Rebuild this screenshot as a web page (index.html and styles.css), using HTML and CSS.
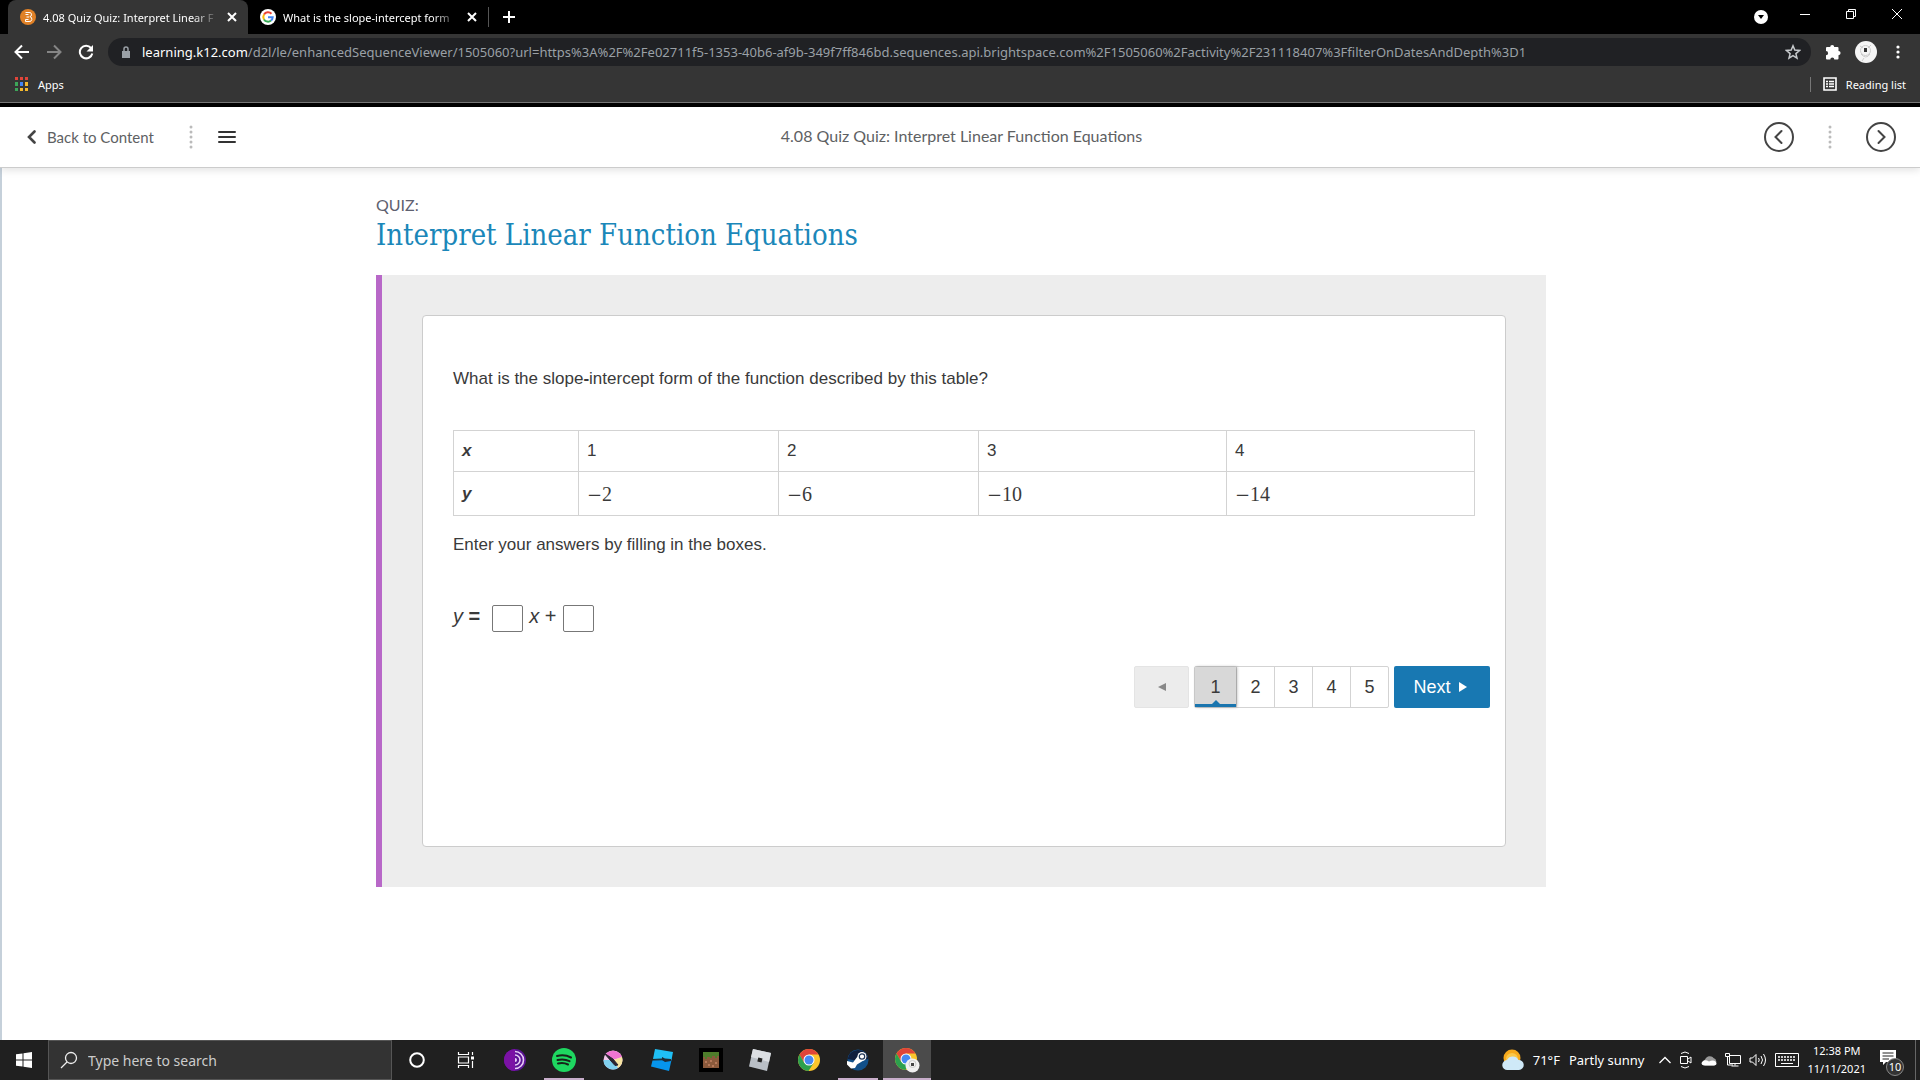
FILE: index.html
```html
<!DOCTYPE html>
<html lang="en">
<head>
    <meta charset="UTF-8">
    <meta name="viewport" content="width=device-width, initial-scale=1.0">
    <title>4.08 Quiz Quiz: Interpret Linear Function Equations</title>
    <link rel="stylesheet" href="styles.css">
</head>
<body>

<svg class="defs" width="0" height="0" aria-hidden="true">
    <symbol id="close" viewBox="0 0 10 10"><path d="M1 1l8 8M9 1l-8 8" fill="none" stroke="#fff" stroke-width="2"/></symbol>
    <symbol id="chrome" viewBox="0 0 24 24">
        <circle cx="12" cy="12" r="11" fill="#fbc52c"/>
        <path d="M2.5 6.5A11 11 0 0 1 21.5 6.500L12 6.500L7 14.500Z" fill="#e04438"/>
        <path d="M2.500 6.500A11 11 0 0 0 11.500 23L16.800 14.800L12 17L7.200 14.700Z" fill="#2ca04e"/>
        <circle cx="12" cy="12" r="5.500" fill="#fff"/>
        <circle cx="12" cy="12" r="4.500" fill="#4688f1"/>
    </symbol>
    <symbol id="dots" viewBox="0 0 4 24">
        <g fill="#bbb"><circle cx="2" cy="2" r="1.500"/><circle cx="2" cy="7" r="1.500"/><circle cx="2" cy="12" r="1.500"/><circle cx="2" cy="17" r="1.500"/><circle cx="2" cy="22" r="1.500"/></g>
    </symbol>
</svg>

<header class="browser">
    <div class="tabs">
        <div class="tab active">
            <svg width="16" height="16" viewBox="0 0 16 16"><circle cx="8" cy="8" r="8" fill="#e08127"/><path d="M5.500 3.500h3.500a2 2 0 0 1 .8 4.200A2.400 2.400 0 0 1 9 12.500H5.500v-2h3M5.500 5.500h3M6.500 8H9" fill="none" stroke="#fff" stroke-width="1"/></svg>
            <span class="tab-title">4.08 Quiz Quiz: Interpret Linear F</span>
            <button class="icon-btn" aria-label="Close tab"><svg width="10" height="10"><use href="#close"/></svg></button>
        </div>
        <div class="tab">
            <svg width="16" height="16" viewBox="0 0 16 16"><circle cx="8" cy="8" r="8" fill="#fff"/><g fill="none" stroke-width="2"><path d="M11.500 4.800A4.700 4.700 0 0 0 4 5.600" stroke="#ea4335"/><path d="M4 5.600a4.700 4.700 0 0 0 0 4.800" stroke="#fbbc05"/><path d="M4 10.400a4.700 4.700 0 0 0 7 1.200" stroke="#34a853"/><path d="M11 11.600A4.700 4.700 0 0 0 12.700 8.200H8" stroke="#4285f4"/></g></svg>
            <span class="tab-title">What is the slope-intercept form</span>
            <button class="icon-btn" aria-label="Close tab"><svg width="10" height="10"><use href="#close"/></svg></button>
        </div>
        <button class="icon-btn new-tab" aria-label="New tab"><svg width="12" height="12" viewBox="0 0 12 12"><path d="M6 0v12M0 6h12" stroke="#fff" stroke-width="2"/></svg></button>
        <div class="window-controls">
            <button class="icon-btn tab-search" aria-label="Search tabs"><svg width="14" height="20" viewBox="0 0 14 20"><circle cx="7" cy="13" r="7" fill="#fff"/><path d="M4 11h6l-3 4z" fill="#000"/></svg></button>
            <button class="icon-btn" aria-label="Minimize"><svg width="10" height="10" viewBox="0 0 10 10"><path d="M0 5.500h10" stroke="#fff"/></svg></button>
            <button class="icon-btn" aria-label="Restore"><svg width="10" height="10" viewBox="0 0 10 10"><path d="M.5 2.500h7v7h-7zM2.500 2V.5h7v7H8" fill="none" stroke="#fff"/></svg></button>
            <button class="icon-btn" aria-label="Close"><svg width="10" height="10" viewBox="0 0 10 10"><path d="M0 0l10 10M10 0L0 10" stroke="#fff"/></svg></button>
        </div>
    </div>

    <div class="toolbar">
        <div class="nav-btns">
            <button class="icon-btn" aria-label="Back"><svg width="16" height="16" viewBox="0 0 16 16"><path d="M15 8H2M8 1.500L1.500 8 8 14.500" fill="none" stroke="#fff" stroke-width="2"/></svg></button>
            <button class="icon-btn" aria-label="Forward"><svg width="16" height="16" viewBox="0 0 16 16"><path d="M1 8h13M8 1.500L14.500 8 8 14.500" fill="none" stroke="#858585" stroke-width="2"/></svg></button>
            <button class="icon-btn" aria-label="Reload"><svg width="16" height="16" viewBox="0 0 16 16"><path d="M13 4a6.300 6.300 0 1 0 1.300 5.500" fill="none" stroke="#fff" stroke-width="2"/><path d="M15 1v6.500H8.500z" fill="#fff"/></svg></button>
        </div>
        <div class="address">
            <svg width="10" height="12" viewBox="0 0 10 12"><path d="M1 5h8v7H1z" fill="#9aa0a6"/><path d="M3 5V3a2 2 0 0 1 4 0v2" fill="none" stroke="#9aa0a6" stroke-width="1.500"/></svg>
            <span class="url"><b>learning.k12.com</b>/d2l/le/enhancedSequenceViewer/1505060?url=https%3A%2F%2Fe02711f5-1353-40b6-af9b-349f7ff846bd.sequences.api.brightspace.com%2F1505060%2Factivity%2F231118407%3FfilterOnDatesAndDepth%3D1</span>
            <button class="icon-btn" aria-label="Bookmark"><svg width="16" height="16" viewBox="0 0 16 16"><path d="M8 1.800l1.800 4.300 4.700.4-3.600 3.100 1.100 4.600L8 11.700l-4 2.500 1.100-4.600L1.500 6.500l4.700-.4z" fill="none" stroke="#c6c9cc" stroke-width="1.500"/></svg></button>
        </div>
        <button class="icon-btn" aria-label="Extensions"><svg width="16" height="16" viewBox="0 0 16 16"><path d="M5.200 3a2 2 0 0 1 4 0h3.300a1 1 0 0 1 1 1v3a2 2 0 0 1 0 4.200v3.300a1 1 0 0 1-1 1H9.300a2 2 0 0 0-4 0H2a1 1 0 0 1-1-1v-3.200a2.100 2.100 0 0 0 0-4.200V4a1 1 0 0 1 1-1z" fill="#fff"/></svg></button>
        <button class="icon-btn" aria-label="Profile"><svg width="22" height="22" viewBox="0 0 22 22"><circle cx="11" cy="11" r="11" fill="#f5f5f5"/><path d="M5 5l3 2M16 4l-3 3M6 13q5 6 9 0M9 17l-2 3" fill="none" stroke="#ccc"/><circle cx="10.500" cy="9.500" r="5" fill="none" stroke="#ccc"/><path d="M9 7h3v4H9z" fill="#333"/></svg></button>
        <button class="icon-btn menu" aria-label="Menu"><svg width="4" height="14" viewBox="0 0 4 14"><g fill="#fff"><circle cx="2" cy="2" r="1.600"/><circle cx="2" cy="7" r="1.600"/><circle cx="2" cy="12" r="1.600"/></g></svg></button>
    </div>

    <div class="bookmarks">
        <a href="#" class="bookmark">
            <svg width="14" height="14" viewBox="0 0 14 14"><g fill="#e0453a"><path d="M0 0h3v3H0zM5 0h3v3H5zM10 0h3v3h-3z"/></g><path d="M0 5h3v4H0zM0 11h3v3H0z" fill="#3da559"/><path d="M5 5h3v4H5z" fill="#4285f4"/><path d="M10 5h3v4h-3zM5 11h3v3H5zM10 11h3v3h-3z" fill="#f4b92e"/></svg>
            Apps
        </a>
        <a href="#" class="bookmark reading">
            <svg width="14" height="14" viewBox="0 0 14 14"><path d="M1 1h12v12H1z" fill="none" stroke="#fff" stroke-width="1.600"/><path d="M3 4.500h2M6 4.500h5M3 7h2M6 7h5M3 9.500h2M6 9.500h5" stroke="#fff" stroke-width="1.500"/></svg>
            Reading list
        </a>
    </div>
</header>

<nav class="course-nav">
    <div class="nav-side">
        <a href="#" class="back-link">
            <svg width="9" height="14" viewBox="0 0 9 14"><path d="M7.500 1.500L2 7l5.500 5.500" fill="none" stroke="#444" stroke-width="2.600" stroke-linecap="round"/></svg>
            Back to Content
        </a>
        <svg width="4" height="24"><use href="#dots"/></svg>
        <button class="icon-btn" aria-label="Table of contents"><svg width="18" height="14" viewBox="0 0 18 14"><path d="M1 2h16M1 7h16M1 12h16" stroke="#333" stroke-width="2" stroke-linecap="round"/></svg></button>
    </div>
    <span class="nav-title">4.08 Quiz Quiz: Interpret Linear Function Equations</span>
    <div class="nav-side nav-arrows">
        <button class="icon-btn" aria-label="Previous"><svg width="30" height="30" viewBox="0 0 30 30"><circle cx="15" cy="15" r="14" fill="none" stroke="#444" stroke-width="2"/><path d="M17.500 9L11.500 15l6 6" fill="none" stroke="#444" stroke-width="2" stroke-linecap="round"/></svg></button>
        <svg width="4" height="24"><use href="#dots"/></svg>
        <button class="icon-btn" aria-label="Next"><svg width="30" height="30" viewBox="0 0 30 30"><circle cx="15" cy="15" r="14" fill="none" stroke="#444" stroke-width="2"/><path d="M12.500 9l6 6-6 6" fill="none" stroke="#444" stroke-width="2" stroke-linecap="round"/></svg></button>
    </div>
</nav>

<main class="page">
    <div class="lesson">
        <p class="kicker">QUIZ:</p>
        <h1>Interpret Linear Function Equations</h1>

        <section class="quiz">
            <form class="card">
                <p>What is the slope<b>-</b>intercept form of the function described by this table?</p>
                <table>
                    <colgroup><col class="col-head"><col class="col-mid"><col class="col-mid"><col class="col-wide"><col></colgroup>
                    <tr><th scope="row">x</th><td>1</td><td>2</td><td>3</td><td>4</td></tr>
                    <tr class="math"><th scope="row">y</th><td><span class="minus">−</span>2</td><td><span class="minus">−</span>6</td><td><span class="minus">−</span>10</td><td><span class="minus">−</span>14</td></tr>
                </table>
                <p>Enter your answers by filling in the boxes.</p>
                <div class="equation">
                    <label for="slope"><i>y</i> <b>=</b></label>
                    <input type="text" id="slope">
                    <label for="intercept"><i>x</i> +</label>
                    <input type="text" id="intercept">
                </div>
                <div class="pager">
                    <button type="button" class="prev" disabled aria-label="Previous question"><svg width="8" height="8" viewBox="0 0 8 8"><path d="M8 0v8L0 4z" fill="#888"/></svg></button>
                    <div class="pages">
                        <button type="button" class="current">1</button>
                        <button type="button">2</button>
                        <button type="button">3</button>
                        <button type="button">4</button>
                        <button type="button">5</button>
                    </div>
                    <button type="button" class="next">Next <svg width="8" height="10" viewBox="0 0 8 10"><path d="M0 0v10l8-5z" fill="#fff"/></svg></button>
                </div>
            </form>
        </section>
    </div>
</main>

<footer class="taskbar">
    <button class="task start" aria-label="Start"><svg width="16" height="16" viewBox="0 0 16 16"><path d="M0 2.300L6.500 1.400v6.100H0zM7.500 1.200L16 0v7.500H7.500zM0 8.500h6.500v6.100L0 13.700zM7.500 8.500H16V16l-8.500-1.200z" fill="#fff"/></svg></button>
    <div class="search">
        <svg width="18" height="18" viewBox="0 0 18 18"><circle cx="11" cy="7" r="5.500" fill="none" stroke="#eee" stroke-width="1.300"/><path d="M7 11l-6 6" stroke="#eee" stroke-width="1.300"/></svg>
        <input type="text" placeholder="Type here to search" aria-label="Search">
    </div>
    <div class="tasks">
        <button class="task" aria-label="Cortana"><svg width="18" height="18" viewBox="0 0 18 18"><circle cx="9" cy="9" r="6.800" fill="none" stroke="#fff" stroke-width="2"/></svg></button>
        <button class="task" aria-label="Task view"><svg width="18" height="16" viewBox="0 0 18 16"><path d="M1.500 0v2.500h10V0M1.500 5h10v6h-10zM1.500 16v-2.500h10V16M15.500 0v3M15.500 9v7" fill="none" stroke="#fff" stroke-width="1.200"/><path d="M14 4.500h3v3h-3z" fill="#fff"/></svg></button>
        <button class="task" aria-label="Tor Browser"><svg width="24" height="24" viewBox="0 0 24 24"><circle cx="12" cy="12" r="11" fill="#5c1496"/><path d="M12 1a11 11 0 0 0 0 22z" fill="#7b12a5"/><path d="M12 3.500a8.500 8.500 0 0 1 0 17M12 7a5 5 0 0 1 0 10" fill="none" stroke="#e8cdf5" stroke-width="1.600"/><path d="M12 10a2 2 0 0 1 0 4z" fill="#e8cdf5"/></svg></button>
        <button class="task running" aria-label="Spotify"><svg width="24" height="24" viewBox="0 0 24 24"><circle cx="12" cy="12" r="12" fill="#1ed760"/><path d="M5 8q7.500-2 14 1.500M5.500 12q6.500-1.600 12 1.200M6 15.500q5.500-1.300 10 1" fill="none" stroke="#17231a" stroke-width="2" stroke-linecap="round"/></svg></button>
        <button class="task" aria-label="Krita"><svg width="22" height="22" viewBox="0 0 22 22"><circle cx="11" cy="11" r="9.500" fill="#f3c8ee"/><path d="M4 5A9.500 9.500 0 0 1 20 8l-9 3z" fill="#ef75d2"/><path d="M20 8a9.500 9.500 0 0 1-4 11l-5-8z" fill="#f6e3a0"/><path d="M1.500 11a9.500 9.500 0 0 0 14.500 8l-5-8z" fill="#80d0ee"/><path d="M2 4l9 6 5 6-3 .5L9 12z" fill="#292330" stroke="#292330" stroke-width="1"/></svg></button>
        <button class="task" aria-label="Roblox Studio"><svg width="24" height="24" viewBox="0 0 24 24"><path d="M5 1l18 3-1.500 8-18.500-1z" fill="#1fc0f5"/><path d="M2.500 12.500l19-.5-2.500 11L1 18.500z" fill="#0695ec"/><path d="M2 11l10-.5V9l3 1.500 6 .5v2l-6 1-3-2z" fill="#202b33"/></svg></button>
        <button class="task" aria-label="Minecraft"><svg width="24" height="24" viewBox="0 0 24 24"><path d="M0 0h24v24H0z" fill="#000"/><path d="M4 4h16v16H4z" fill="#8b5a3c"/><path d="M4 4h16v4h-2v2h-2V8h-3v2h-2V9H8v2H6V9H4z" fill="#4f7d2b"/><path d="M6 13h2v2H6zM11 12h2v2h-2zM16 14h2v2h-2zM9 16h2v2H9zM13 17h2v2h-2z" fill="#b5795a"/></svg></button>
        <button class="task" aria-label="Roblox"><svg width="24" height="24" viewBox="0 0 24 24"><path d="M5 1l18 4-4 18L1 18.500z" fill="#b9bfc6"/><path d="M5 1l18 4-2 9L3 9z" fill="#dcdfe3"/><path d="M10.300 9.500l4.200 1-1 4-4.200-1z" fill="#222"/></svg></button>
        <button class="task" aria-label="Chrome"><svg width="24" height="24"><use href="#chrome"/></svg></button>
        <button class="task running" aria-label="Steam"><svg width="24" height="24" viewBox="0 0 24 24"><circle cx="12" cy="12" r="10.500" fill="#11508a"/><path d="M1.600 11a10.500 10.500 0 0 1 20.800 0L12 13z" fill="#111f3d"/><path d="M1 13l6 1.500 4.500-6 6 4-6.500 4-2 3.500-4 .5-4-4z" fill="#fff"/><circle cx="16" cy="8.500" r="4.500" fill="#fff"/><circle cx="16" cy="8.500" r="2.700" fill="#fff" stroke="#203656" stroke-width="1.200"/></svg></button>
        <button class="task running focused" aria-label="Chrome window"><svg width="26" height="26" viewBox="0 0 26 26"><use href="#chrome" width="24" height="24"/><circle cx="18.500" cy="18.500" r="7" fill="#f1f1f1"/><circle cx="18.500" cy="17" r="3.500" fill="none" stroke="#ccc"/><path d="M17 16h3v3h-3z" fill="#444"/></svg></button>
    </div>
    <div class="tray">
        <button class="weather">
            <svg width="22" height="22" viewBox="0 0 22 22"><circle cx="10" cy="9" r="8.500" fill="#f7a91b"/><circle cx="10" cy="10" r="6" fill="#fbc849"/><path d="M5.500 21a5 5 0 0 1-.5-10 6.500 6.500 0 0 1 11.500 0 5 5 0 0 1 .5 10z" fill="#cfe9f8"/></svg>
            <span>71°F</span>
            <span>Partly sunny</span>
        </button>
        <svg width="12" height="8" viewBox="0 0 12 8"><path d="M.5 7L6 1.500 11.500 7" fill="none" stroke="#fff" stroke-width="1.300"/></svg>
        <svg width="14" height="18" viewBox="0 0 14 18"><path d="M1.500 5.500h7v7h-7zM9 8l3-2v6l-3-2M2 2.500q4-3 8 0M2 15.500q4 3 8 0" fill="none" stroke="#fff"/></svg>
        <svg width="16" height="12" viewBox="0 0 16 12"><path d="M4 11.500a3.500 3.500 0 0 1 0-6A5 5 0 0 1 12.500 4a4 4 0 0 1 .5 7.500z" fill="#999"/><path d="M3 11.500q-4-1-1.500-4Q4 5 8 7.500q4-2 6.500 0 2.500 3-1 4z" fill="#fff"/></svg>
        <svg width="16" height="16" viewBox="0 0 16 16"><path d="M4.500 3.500h11v8h-11zM10 11.500v2M6.500 14h7M.5 1.500h4v3h-4zM2.500 5v8H8" fill="none" stroke="#fff"/></svg>
        <svg width="18" height="14" viewBox="0 0 18 14"><path d="M1 5h2.500L7 1.500v11L3.500 9H1zM9.500 5q1.500 2 0 4M12 3q3 4 0 8M14.500 1q4 6 0 12" fill="none" stroke="#fff"/></svg>
        <svg width="24" height="14" viewBox="0 0 24 14"><path d="M.5.500h23v13H.5z" fill="none" stroke="#fff"/><path d="M3 4h18M3 7h18" stroke="#fff" stroke-width="1.300" stroke-dasharray="2 1"/><path d="M6 10.500h12" stroke="#fff"/></svg>
        <div class="clock">12:38 PM<br>11/11/2021</div>
        <button class="notes" aria-label="10 notifications"><svg width="16" height="16" viewBox="0 0 16 16"><path d="M0 0h16v12H6l-3 3v-3H0z" fill="#fff"/><path d="M2.500 3h11M2.500 6h11M2.500 9H9" stroke="#222"/></svg><span class="badge">10</span></button>
    </div>
</footer>

</body>
</html>
```
FILE: styles.css
```css
* {
    box-sizing: border-box;
}
body {
    margin: 0;
    min-height: 100vh;
    display: flex;
    flex-direction: column;
    background: #fff;
    color: #3a3a3a;
    font-family: "Liberation Sans", Arial, sans-serif;
    font-size: 17px;
}
.defs {
    position: absolute;
}
svg {
    display: block;
    flex: none;
}
a {
    color: inherit;
    text-decoration: none;
}
button {
    font: inherit;
    color: inherit;
    background: none;
    border: none;
    padding: 0;
    cursor: pointer;
}

/* Browser window */
.browser {
    background: #353535;
    border-bottom: 4px solid #000;
    color: #fff;
    font-family: "Noto Sans", "Open Sans", sans-serif;
    font-size: 11px;
}
.tabs {
    display: flex;
    height: 34px;
    padding-left: 8px;
    background: #000;
}
.tab {
    display: flex;
    align-items: center;
    width: 240px;
    padding: 0 11px 0 12px;
}
.tab.active {
    background: #353535;
    border-radius: 8px 8px 0 0;
}
.tab-title {
    flex: 1;
    margin: 0 8px 0 7px;
    overflow: hidden;
    white-space: nowrap;
    -webkit-mask-image: linear-gradient(to right, #000 85%, transparent);
    mask-image: linear-gradient(to right, #000 85%, transparent);
}
.icon-btn {
    display: flex;
    align-items: center;
    justify-content: center;
}
.new-tab {
    align-self: center;
    height: 20px;
    padding-left: 14px;
    border-left: 1px solid #555;
}
.window-controls {
    display: flex;
    gap: 36px;
    margin-left: auto;
    padding: 0 18px 6px 0;
}
.tab-search {
    margin-right: -4px;
}
.toolbar {
    display: flex;
    align-items: center;
    gap: 14px;
    padding: 4px 20px 0 14px;
}
.nav-btns {
    display: flex;
    gap: 16px;
}
.menu {
    margin-left: 5px;
}
.address {
    flex: 1;
    display: flex;
    align-items: center;
    min-width: 0;
    height: 28px;
    padding: 0 10px 0 13px;
    border-radius: 14px;
    background: #202124;
    color: #9aa0a6;
    font-size: 13px;
}
.url {
    flex: 1;
    min-width: 0;
    margin-left: 11px;
    overflow: hidden;
    white-space: nowrap;
}
.url b {
    color: #fff;
    font-weight: normal;
}
.bookmarks {
    display: flex;
    align-items: center;
    justify-content: space-between;
    height: 37px;
    padding: 0 14px 0 15px;
    border-bottom: 1px solid #777;
}
.bookmark {
    display: flex;
    align-items: center;
    gap: 9px;
}
.reading {
    padding-left: 12px;
    border-left: 1px solid #777;
}

/* Course navigation */
.course-nav {
    display: flex;
    align-items: center;
    justify-content: space-between;
    height: 61px;
    padding: 0 24px 0 27px;
    border-bottom: 1px solid #ccc;
    box-shadow: 0 2px 8px rgba(0, 0, 0, 0.12);
    color: #5e6163;
    font-family: Lato, sans-serif;
    font-size: 16px;
    z-index: 1;
}
.nav-side {
    flex: 1;
    display: flex;
    align-items: center;
    gap: 25px;
}
.nav-title {
    padding-bottom: 3px;
}
.nav-arrows {
    justify-content: flex-end;
    gap: 34px;
}
.back-link {
    display: flex;
    align-items: center;
    gap: 11px;
    margin-right: 10px;
    font-size: 15px;
}

/* Lesson */
.page {
    flex: 1;
    padding: 25px 16px;
    border-left: 2px solid #c5d0da;
}
.lesson {
    max-width: 1170px;
    margin: 0 auto;
}
.kicker {
    margin: 0;
    color: #5e6170;
    font-family: Lato, sans-serif;
    font-size: 16px;
    line-height: 24px;
}
h1 {
    margin: 0 0 22px;
    color: #1b87b9;
    font-family: "DejaVu Serif Condensed", "DejaVu Serif", serif;
    font-size: 29px;
    font-weight: normal;
    line-height: 36px;
}
.quiz {
    padding: 40px;
    background: #ededed;
    border-left: 6px solid #b868c8;
}
.card {
    padding: 51px 15px 138px 30px;
    background: #fff;
    border: 1px solid #ccc;
    border-radius: 4px;
}
.card p {
    margin: 0;
    line-height: 24px;
}
table {
    width: calc(100% - 15px);
    margin: 39px 0 17px;
    border-collapse: collapse;
    table-layout: fixed;
}
.col-head {
    width: 125px;
}
.col-mid {
    width: 200px;
}
.col-wide {
    width: 248px;
}
th, td {
    height: 41px;
    padding: 0 8px;
    border: 1px solid #d3d3d3;
    text-align: left;
}
th {
    font-style: italic;
}
.math th {
    height: 44px;
}
.math td {
    padding-top: 2px;
    font-family: "Liberation Serif", serif;
    font-size: 20px;
}
.minus {
    font-family: "DejaVu Serif", serif;
    font-size: 18px;
}
.equation {
    display: flex;
    align-items: flex-start;
    gap: 6px;
    margin-top: 48px;
    font-size: 20px;
}
.equation input {
    width: 31px;
    height: 27px;
    padding: 2px 4px;
    border: 1px solid #777;
    border-radius: 2px;
    font: inherit;
}
#slope {
    margin-left: 6px;
}
.pager {
    display: flex;
    justify-content: flex-end;
    gap: 5px;
    height: 42px;
    margin-top: 34px;
    font-size: 18px;
}
.prev {
    display: flex;
    align-items: center;
    justify-content: center;
    width: 55px;
    background: #ececec;
    border: 1px solid #e4e4e4;
    border-radius: 2px;
}
.pages {
    display: flex;
    border: 1px solid #d3d3d3;
    border-radius: 2px;
}
.pages button {
    width: 38px;
    border-left: 1px solid #d3d3d3;
}
.pages .current {
    position: relative;
    width: 41px;
    padding-top: 3px;
    background: #d8d8d8;
    border-left: none;
    border-bottom: 3px solid #1a75ae;
    box-shadow: 1px 0 3px rgba(0, 0, 0, 0.3);
}
.pages .current::after {
    content: "";
    position: absolute;
    left: 50%;
    bottom: 0;
    margin-left: -4px;
    border: 4px solid transparent;
    border-top: none;
    border-bottom-color: #1a75ae;
}
.next {
    display: flex;
    align-items: center;
    justify-content: center;
    gap: 8px;
    width: 96px;
    padding-right: 4px;
    background: #1878b2;
    border-radius: 2px;
    color: #fff;
}

/* Taskbar */
.taskbar {
    display: flex;
    height: 40px;
    background: #202020;
    color: #fff;
    font-family: "Noto Sans", "Open Sans", sans-serif;
    font-size: 13px;
}
.task {
    display: flex;
    align-items: center;
    justify-content: center;
    width: 48px;
}
.search {
    display: flex;
    align-items: center;
    gap: 10px;
    width: 344px;
    padding: 0 11px;
    background: #333;
    border: 1px solid #555;
}
.search input {
    flex: 1;
    padding: 0;
    border: none;
    background: none;
    color: #fff;
    font: inherit;
    font-size: 14px;
}
.search input::placeholder {
    color: #ccc;
}
.tasks {
    display: flex;
    gap: 1px;
    margin-left: 1px;
}
.running {
    background: linear-gradient(#c8aecb, #c8aecb) bottom / 40px 2px no-repeat;
}
.focused {
    background-color: #4b4b4b;
    background-size: 100% 2px;
}
.tray {
    display: flex;
    align-items: center;
    gap: 8px;
    margin-left: auto;
    margin-right: 4px;
    padding-right: 11px;
    border-right: 1px solid #666;
}
.weather {
    display: flex;
    align-items: center;
    gap: 9px;
    margin-right: 7px;
}
.clock {
    font-size: 11px;
    line-height: 18px;
    text-align: center;
}
.notes {
    position: relative;
    padding: 0 8px 4px 6px;
}
.badge {
    position: absolute;
    right: 0;
    bottom: -6px;
    width: 18px;
    height: 18px;
    border: 1px solid #888;
    border-radius: 50%;
    background: #333;
    font-size: 11px;
    line-height: 16px;
}
```
